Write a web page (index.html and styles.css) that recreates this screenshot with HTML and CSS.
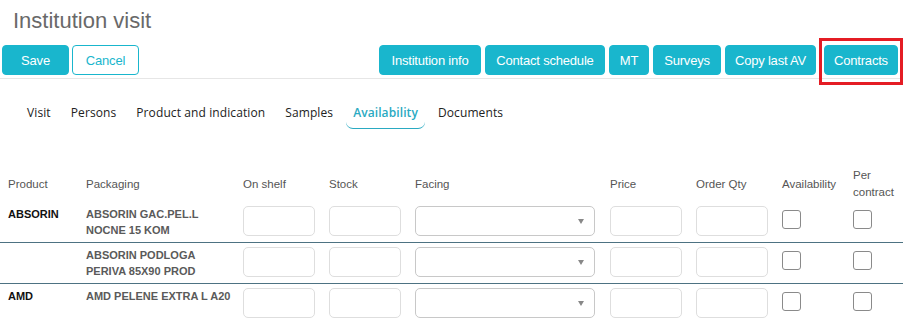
FILE: index.html
```html
<!DOCTYPE html>
<html lang="en">
<head>
    <meta charset="UTF-8">
    <title>Institution visit</title>
    <link rel="stylesheet" href="styles.css">
</head>
<body>
    <div class="page">
        <h1 class="title">Institution visit</h1>

        <div class="toolbar">
            <div class="toolbar-left">
                <button class="btn btn-save">Save</button>
                <button class="btn btn-outline">Cancel</button>
            </div>
            <div class="toolbar-right">
                <button class="btn btn-info">Institution info</button>
                <button class="btn btn-schedule">Contact schedule</button>
                <button class="btn btn-mt">MT</button>
                <button class="btn btn-surveys">Surveys</button>
                <button class="btn btn-copy">Copy last AV</button>
                <button class="btn btn-contracts">Contracts</button>
            </div>
            <!-- annotation box around Contracts -->
            <div class="highlight"></div>
        </div>

        <div class="tabs">
            <span class="tab">Visit</span>
            <span class="tab">Persons</span>
            <span class="tab">Product and indication</span>
            <span class="tab">Samples</span>
            <span class="tab active">Availability</span>
            <span class="tab">Documents</span>
        </div>

        <table class="grid">
            <colgroup>
                <col class="c-product">
                <col class="c-packaging">
                <col class="c-num">
                <col class="c-num">
                <col class="c-facing">
                <col class="c-num">
                <col class="c-num">
                <col class="c-avail">
                <col class="c-contract">
            </colgroup>
            <thead>
                <tr>
                    <th>Product</th>
                    <th>Packaging</th>
                    <th>On shelf</th>
                    <th>Stock</th>
                    <th>Facing</th>
                    <th>Price</th>
                    <th>Order Qty</th>
                    <th>Availability</th>
                    <th>Per contract</th>
                </tr>
            </thead>
            <tbody>
                <tr>
                    <td class="product">ABSORIN</td>
                    <td class="packaging">ABSORIN GAC.PEL.L<br>NOCNE 15 KOM</td>
                    <td><input class="field" type="text"></td>
                    <td><input class="field" type="text"></td>
                    <td><div class="select"><span class="caret"></span></div></td>
                    <td><input class="field" type="text"></td>
                    <td><input class="field" type="text"></td>
                    <td><span class="check"></span></td>
                    <td><span class="check"></span></td>
                </tr>
                <tr>
                    <td class="product"></td>
                    <td class="packaging">ABSORIN PODLOGA<br>PERIVA 85X90 PROD</td>
                    <td><input class="field" type="text"></td>
                    <td><input class="field" type="text"></td>
                    <td><div class="select"><span class="caret"></span></div></td>
                    <td><input class="field" type="text"></td>
                    <td><input class="field" type="text"></td>
                    <td><span class="check"></span></td>
                    <td><span class="check"></span></td>
                </tr>
                <tr class="last">
                    <td class="product">AMD</td>
                    <td class="packaging">AMD PELENE EXTRA L A20</td>
                    <td><input class="field" type="text"></td>
                    <td><input class="field" type="text"></td>
                    <td><div class="select"><span class="caret"></span></div></td>
                    <td><input class="field" type="text"></td>
                    <td><input class="field" type="text"></td>
                    <td><span class="check"></span></td>
                    <td><span class="check"></span></td>
                </tr>
            </tbody>
        </table>
    </div>
</body>
</html>
```

FILE: styles.css
```css
* {
    margin: 0;
    padding: 0;
    box-sizing: border-box;
}

body {
    background: #fff;
    font-family: "Liberation Sans", Arial, sans-serif;
    overflow: hidden;
}

.page {
    width: 903px;
    height: 333px;
    overflow: hidden;
}

.title {
    font-size: 22px;
    font-weight: normal;
    line-height: 26px;
    color: #696969;
    padding: 8px 0 0 13px;
    height: 45px;
}

.toolbar {
    position: relative;
    display: flex;
    justify-content: space-between;
    padding: 0 5px 3px 2px;
    border-bottom: 1px solid #e6e6e6;
}

.toolbar-left,
.toolbar-right {
    display: flex;
    gap: 3px;
}

.toolbar-right {
    gap: 4px;
}

.btn {
    height: 30px;
    padding: 0;
    border: 1px solid #19b6cd;
    border-radius: 4px;
    background: #19b6cd;
    color: #fff;
    font-family: "Liberation Sans", Arial, sans-serif;
    font-size: 13px;
    letter-spacing: -0.2px;
    text-align: center;
}

.btn-save,
.btn-outline {
    width: 67px;
}

.btn-outline {
    background: #fff;
    color: #19b6cd;
}

.btn-info { width: 102px; }
.btn-schedule { width: 120px; }
.btn-mt { width: 40px; }
.btn-surveys { width: 68px; }
.btn-copy { width: 91px; }

.btn-contracts {
    width: 74px;
    margin-left: 4px;
}

.highlight {
    position: absolute;
    left: 819px;
    top: -7px;
    width: 84px;
    height: 47px;
    border: 3px solid #e41c24;
}

.tabs {
    display: flex;
    gap: 6px;
    padding: 20px 0 0 20px;
    height: 88px;
}

.tab {
    height: 30px;
    padding: 5px 7px;
    font-family: "Open Sans", sans-serif;
    font-size: 12px;
    letter-spacing: 0.1px;
    line-height: 18px;
    color: #222;
    border-bottom: 1px solid transparent;
    border-radius: 0 0 7px 7px;
}

.tab.active {
    color: #2aaac2;
    font-weight: 600;
    border-bottom-color: #2aaac2;
}

.grid {
    width: 903px;
    table-layout: fixed;
    border-collapse: collapse;
    font-size: 11px;
}

.c-product { width: 86px; }
.c-packaging { width: 157px; }
.c-num { width: 86px; }
.c-facing { width: 195px; }
.c-avail { width: 71px; }
.c-contract { width: 50px; }

.grid th {
    text-align: left;
    font-weight: normal;
    font-size: 11.5px;
    color: #555;
    line-height: 17px;
    height: 35px;
    vertical-align: middle;
    padding-bottom: 1px;
}

.grid th:first-child,
.grid td:first-child {
    padding-left: 8px;
}

.grid td {
    vertical-align: top;
    padding: 4px 0;
    line-height: 16px;
    border-bottom: 1px solid #4d7282;
}

.grid tr.last td {
    border-bottom: none;
}

.product {
    font-weight: bold;
    color: #111;
}

.packaging {
    font-weight: bold;
    color: #5a5a5a;
}

.field {
    display: block;
    width: 72px;
    height: 30px;
    border: 1px solid #dedede;
    border-radius: 5px;
    background: #fff;
}

.select {
    position: relative;
    width: 180px;
    height: 30px;
    border: 1px solid #c8c8c8;
    border-radius: 5px;
}

.caret {
    position: absolute;
    right: 10px;
    top: 12px;
    border-left: 3px solid transparent;
    border-right: 3px solid transparent;
    border-top: 5px solid #888;
}

.check {
    display: block;
    width: 19px;
    height: 19px;
    margin-top: 4px;
    border: 1px solid #8a8a8a;
    border-radius: 3px;
}
```
